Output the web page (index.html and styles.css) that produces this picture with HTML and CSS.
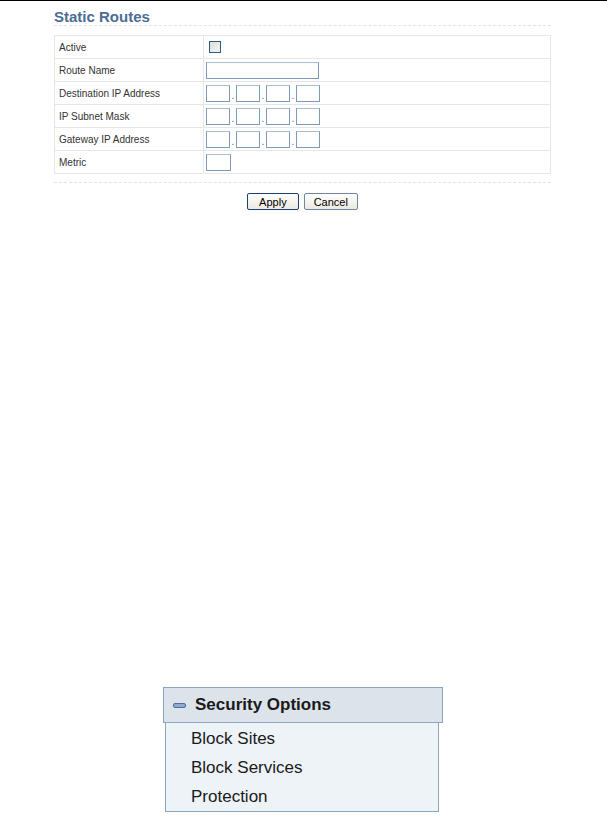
FILE: index.html
```html
<!DOCTYPE html>
<html>
<head>
<meta charset="utf-8">
<link rel="stylesheet" href="styles.css">
</head>
<body>
<div class="topline"></div>
<section class="panel">
  <h1 class="title">Static Routes</h1>
  <table class="form">
    <tr><td class="label">Active</td><td class="field"><span class="check"></span></td></tr>
    <tr><td class="label">Route Name</td><td class="field"><span class="input wide"></span></td></tr>
    <tr><td class="label">Destination IP Address</td><td class="field"><span class="input ip"></span><span class="dot">.</span><span class="input ip"></span><span class="dot">.</span><span class="input ip"></span><span class="dot">.</span><span class="input ip"></span></td></tr>
    <tr><td class="label">IP Subnet Mask</td><td class="field"><span class="input ip"></span><span class="dot">.</span><span class="input ip"></span><span class="dot">.</span><span class="input ip"></span><span class="dot">.</span><span class="input ip"></span></td></tr>
    <tr><td class="label">Gateway IP Address</td><td class="field"><span class="input ip"></span><span class="dot">.</span><span class="input ip"></span><span class="dot">.</span><span class="input ip"></span><span class="dot">.</span><span class="input ip"></span></td></tr>
    <tr><td class="label">Metric</td><td class="field"><span class="input metric"></span></td></tr>
  </table>
  <div class="actions">
    <button class="btn default">Apply</button>
    <button class="btn">Cancel</button>
  </div>
</section>
<nav class="menu">
  <div class="menu-head"><span class="minus"></span><span>Security Options</span></div>
  <ul class="menu-list">
    <li>Block Sites</li>
    <li>Block Services</li>
    <li>Protection</li>
  </ul>
</nav>
</body>
</html>
```
FILE: styles.css
```css
body {
  margin: 0;
  background: #fff;
  font-family: "Liberation Sans", Arial, sans-serif;
}
.topline {
  height: 1px;
  background: #000;
}
.panel {
  width: 497px;
  margin-left: 54px;
}
.title {
  margin: 0;
  padding-top: 7px;
  font-size: 15px;
  line-height: 17px;
  font-weight: bold;
  color: #4b6d93;
  border-bottom: 1px dashed #dfe3e8;
}
.form {
  margin-top: 9px;
  width: 497px;
  border-collapse: collapse;
  font-size: 10px;
  color: #333;
}
.form td {
  height: 22px;
  padding: 0;
  border: 1px solid #e6e6e6;
}
.form .label {
  width: 144px;
  padding-left: 4px;
}
.form .field {
  padding-left: 2px;
}
.field > span {
  vertical-align: middle;
}
.check {
  display: inline-block;
  width: 10px;
  height: 10px;
  margin-left: 3px;
  border: 1px solid #2b5a8c;
  background: linear-gradient(135deg, #dcdcd6, #f6f6f4);
}
.input {
  display: inline-block;
  box-sizing: border-box;
  height: 17px;
  border: 1px solid #7c9bb9;
  border-top-color: #a9bfd5;
  background: #fff;
}
.input.wide { width: 113px; }
.input.ip { width: 24px; }
.input.metric { width: 25px; }
.dot {
  display: inline-block;
  width: 6px;
  text-align: center;
  font-size: 10px;
  line-height: 10px;
  padding-top: 6px;
  color: #666;
}
.actions {
  margin-top: 8px;
  border-top: 1px dashed #dfe3e8;
  padding-top: 10px;
  display: flex;
  justify-content: center;
  gap: 5px;
}
.btn {
  font-family: "Liberation Sans", Arial, sans-serif;
  font-size: 11px;
  color: #000;
  height: 17px;
  padding: 0 9px;
  border: 1px solid #6f87a0;
  border-radius: 2px;
  background: linear-gradient(#ffffff, #ece9e0);
}
.btn.default {
  border-color: #1c3f6e;
  padding: 0 11px;
}
.menu {
  margin-top: 477px;
  margin-left: 163px;
  width: 280px;
}
.menu-head {
  box-sizing: border-box;
  height: 36px;
  border: 1px solid #8da6c0;
  background: #dce3eb;
  display: flex;
  align-items: center;
  padding-left: 9px;
  gap: 9px;
  font-size: 17px;
  font-weight: bold;
  color: #1a1a1a;
}
.minus {
  width: 11px;
  height: 3px;
  border: 1px solid #4d6f99;
  border-radius: 2px;
  background: #8eaad0;
}
.menu-list {
  list-style: none;
  margin: 0 4px 0 2px;
  padding: 1px 0 0 25px;
  border: 1px solid #8da6c0;
  border-top: none;
  background: #eef3f8;
  font-size: 17px;
  color: #1a1a1a;
}
.menu-list li {
  height: 29px;
  line-height: 29px;
}
```
